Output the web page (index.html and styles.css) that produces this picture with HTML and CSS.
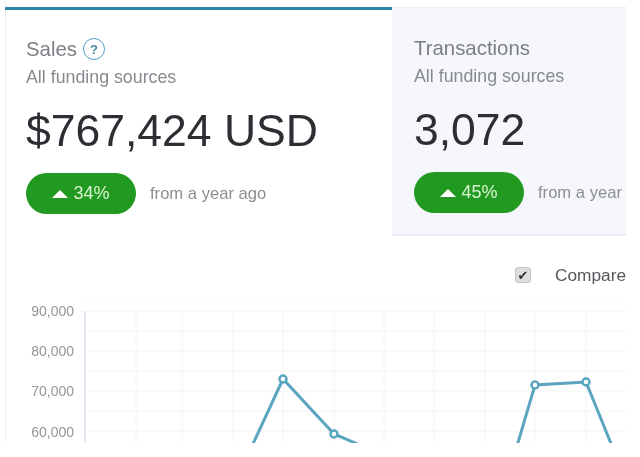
FILE: index.html
```html
<!DOCTYPE html>
<html lang="en">
<head>
    <meta charset="UTF-8">
    <meta name="viewport" content="width=device-width, initial-scale=1.0">
    <title>Sales overview</title>
    <link rel="stylesheet" href="styles.css">
</head>
<body>
    <div class="frame">
        <div class="tabs">
            <div class="tab tab-active">
                <h3>Sales
                    <span class="help">?</span>
                </h3>
                <p class="source">All funding sources</p>
                <p class="value">$767,424 USD</p>
                <div class="change">
                    <span class="pill"><span class="arrow"></span>34%</span>
                    <span class="note">from a year ago</span>
                </div>
            </div>
            <div class="tab">
                <h3>Transactions</h3>
                <p class="source">All funding sources</p>
                <p class="value">3,072</p>
                <div class="change">
                    <span class="pill"><span class="arrow"></span>45%</span>
                    <span class="note">from a year</span>
                </div>
            </div>
        </div>

        <label class="compare">
            <input type="checkbox" checked>
            <span>Compare</span>
        </label>

        <svg class="chart" width="621" height="157" viewBox="5 286 621 157">
            <g class="grid-h">
                <line class="grid-top" x1="85" y1="303" x2="626" y2="303"/>
                <line x1="77" y1="311" x2="626" y2="311"/>
                <line x1="85" y1="331" x2="626" y2="331"/>
                <line x1="85" y1="351" x2="626" y2="351"/>
                <line x1="85" y1="371" x2="626" y2="371"/>
                <line x1="85" y1="391" x2="626" y2="391"/>
                <line x1="85" y1="411" x2="626" y2="411"/>
                <line x1="85" y1="431" x2="626" y2="431"/>
            </g>
            <g class="grid-v">
                <line x1="136" y1="311" x2="136" y2="443"/>
                <line x1="182" y1="311" x2="182" y2="443"/>
                <line x1="233" y1="311" x2="233" y2="443"/>
                <line x1="283" y1="311" x2="283" y2="443"/>
                <line x1="334" y1="311" x2="334" y2="443"/>
                <line x1="384" y1="311" x2="384" y2="443"/>
                <line x1="434" y1="311" x2="434" y2="443"/>
                <line x1="485" y1="311" x2="485" y2="443"/>
                <line x1="535" y1="311" x2="535" y2="443"/>
                <line x1="586" y1="311" x2="586" y2="443"/>
            </g>
            <line class="axis" x1="85" y1="311" x2="85" y2="443"/>
            <g class="labels">
                <text x="74" y="316">90,000</text>
                <text x="74" y="356">80,000</text>
                <text x="74" y="396">70,000</text>
                <text x="74" y="437">60,000</text>
            </g>
            <polyline class="series" points="252,446 283,379 334,434 362,446"/>
            <polyline class="series" points="517,446 535,385 586,382 612,446"/>
            <g class="points">
                <circle cx="283" cy="379" r="3.5"/>
                <circle cx="334" cy="434" r="3.5"/>
                <circle cx="535" cy="385" r="3.5"/>
                <circle cx="586" cy="382" r="3.5"/>
            </g>
        </svg>
    </div>
</body>
</html>
```

FILE: styles.css
```css
* {
    margin: 0;
    padding: 0;
    box-sizing: border-box;
    font-family: "Liberation Sans", Arial, sans-serif;
}

html, body {
    width: 100%;
    height: 100%;
    overflow: hidden;
    background: #fff;
}

.frame {
    width: 621px;
    height: 443px;
    margin-left: 5px;
    overflow: hidden;
    filter: blur(0.5px);
    box-shadow: inset 1px 0 0 #eef0f4;
}

.tabs {
    display: flex;
    margin-top: 7px;
    height: 229px;
}

.tab {
    flex: 0 0 234px;
    padding: 28px 0 0 22px;
    background: #f5f7fc;
    border-top: 1px solid #eceef3;
    border-bottom: 2px solid #e9ebf2;
    white-space: nowrap;
    overflow: hidden;
}

.tab-active {
    flex: 0 0 387px;
    padding: 27px 0 0 21px;
    background: transparent;
    border-top: 3px solid #2d86a6;
    border-bottom: 0;
}

.tab h3 {
    display: flex;
    align-items: center;
    gap: 6px;
    height: 24px;
    font-size: 20.4px;
    font-weight: normal;
    color: #7b7f84;
}

.help {
    display: flex;
    align-items: center;
    justify-content: center;
    width: 22px;
    height: 22px;
    border: 1.5px solid #4f9fc0;
    border-radius: 50%;
    font-size: 13px;
    font-weight: bold;
    color: #4a86a0;
}

.source {
    margin-top: 7px;
    font-size: 17.8px;
    line-height: 18px;
    color: #868a8f;
}

.value {
    margin-top: 17px;
    font-size: 44.5px;
    line-height: 56px;
    color: #2c2e33;
}

.change {
    display: flex;
    align-items: center;
    gap: 14px;
    margin-top: 14px;
}

.pill {
    flex: none;
    display: flex;
    align-items: center;
    justify-content: center;
    gap: 5px;
    width: 110px;
    height: 41px;
    border-radius: 21px;
    background: #229a22;
    color: #d9f3cf;
    font-size: 18px;
}

.arrow {
    width: 0;
    height: 0;
    border-left: 8px solid transparent;
    border-right: 8px solid transparent;
    border-bottom: 8px solid #fff;
}

.note {
    font-size: 16.6px;
    color: #8b8e92;
}

.compare {
    display: flex;
    align-items: center;
    gap: 24px;
    height: 20px;
    margin-top: 29px;
    padding-left: 510px;
    white-space: nowrap;
    font-size: 17.3px;
    color: #55585c;
}

.compare input {
    flex: none;
    appearance: none;
    display: flex;
    align-items: center;
    justify-content: center;
    width: 16px;
    height: 16px;
    border: 1px solid #c4c4c4;
    border-radius: 3px;
    background: #dedede;
}

.compare input::after {
    content: "✔";
    font-family: "DejaVu Sans", sans-serif;
    font-size: 13px;
    color: #333;
}

.chart {
    display: block;
    margin-top: 1px;
}

.grid-h line, .grid-v line {
    stroke: #f3f4f6;
    stroke-width: 1;
}

.grid-h .grid-top {
    stroke: #fafafb;
}

.axis {
    stroke: #e3e6f0;
    stroke-width: 2;
}

.labels text {
    font-size: 14px;
    fill: #94969a;
    text-anchor: end;
}

.series {
    fill: none;
    stroke: #5ba5c0;
    stroke-width: 3;
}

.points circle {
    fill: #fff;
    stroke: #5ba5c0;
    stroke-width: 2.5;
}
```
